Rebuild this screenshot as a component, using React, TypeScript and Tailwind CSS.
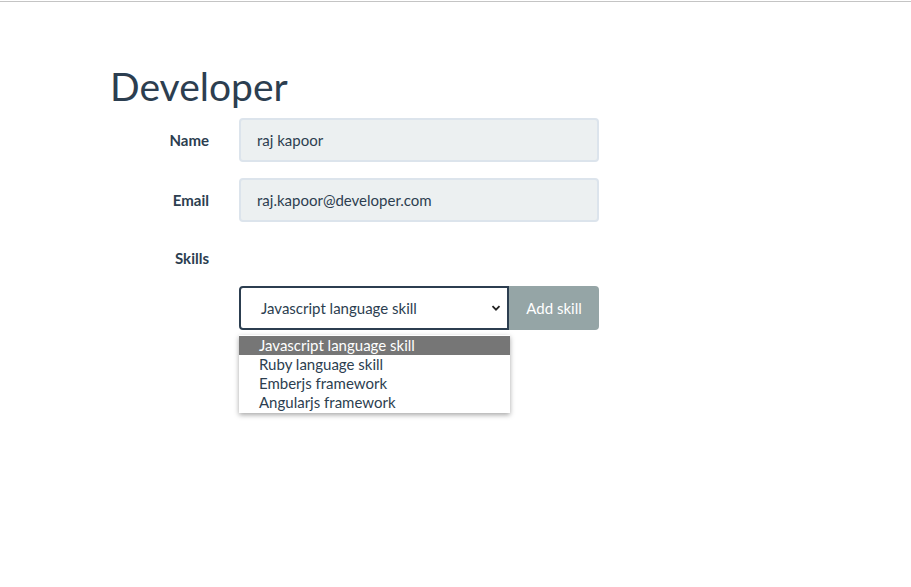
import React, { useState } from 'react';

const skills = [
    'Javascript language skill',
    'Ruby language skill',
    'Emberjs framework',
    'Angularjs framework',
];

const Field: React.FC<{ label: string; children?: React.ReactNode }> = ({ label, children }) => (
    <div className="flex items-center h-[44px]">
        <div className="w-[100px] pr-[1px] text-right text-[15px] font-bold text-[#2c3e50]">{label}</div>
        <div className="ml-[29px]">{children}</div>
    </div>
);

const App: React.FC = () => {
    const [selected] = useState(skills[0]);

    return (
        <div className="min-h-[587px] bg-white border-t border-[#c4c4c4] mt-px font-['Lato','Liberation_Sans',sans-serif] text-[#2c3e50]">
            <div className="pl-[110px] pt-[60px]">
                <h1 className="text-[39px] leading-[48px] text-[#2c3e50]">Developer</h1>
                <div className="mt-[8px] flex flex-col gap-[16px]">
                    <Field label="Name">
                        <div className="w-[360px] h-[44px] flex items-center px-[16px] bg-[#ecf0f1] border-2 border-[#dce4ec] rounded text-[15px]">
                            raj kapoor
                        </div>
                    </Field>
                    <Field label="Email">
                        <div className="w-[360px] h-[44px] flex items-center px-[16px] bg-[#ecf0f1] border-2 border-[#dce4ec] rounded text-[15px]">
                            raj.kapoor@developer.com
                        </div>
                    </Field>
                    <div className="-mt-[2px]">
                        <Field label="Skills" />
                    </div>
                </div>
                <div className="ml-[129px] mt-[6px] flex relative w-[360px]">
                    <div className="w-[270px] h-[44px] flex items-center justify-between pl-[20px] pr-[6px] bg-white border-2 border-[#2c3e50] rounded-l text-[15px]">
                        <span>{selected}</span>
                        <svg width="10" height="10" viewBox="0 0 10 10" fill="none">
                            <path d="M1.5 3.2 5 6.7 8.5 3.2" stroke="#222" strokeWidth="1.8" />
                        </svg>
                    </div>
                    <button className="w-[90px] h-[44px] bg-[#95a5a6] text-white text-[15px] rounded-r">Add skill</button>
                    <ul className="absolute left-0 top-[49px] w-[271px] py-[1px] bg-white shadow-[0_2px_5px_rgba(0,0,0,0.35)] text-[15px] leading-[19px]">
                        {skills.map(s => (
                            <li
                                key={s}
                                className={s === selected ? 'pl-[20px] bg-[#767676] text-white' : 'pl-[20px] text-[#2c3e50]'}
                            >
                                {s}
                            </li>
                        ))}
                    </ul>
                </div>
            </div>
        </div>
    );
};

export default App;
